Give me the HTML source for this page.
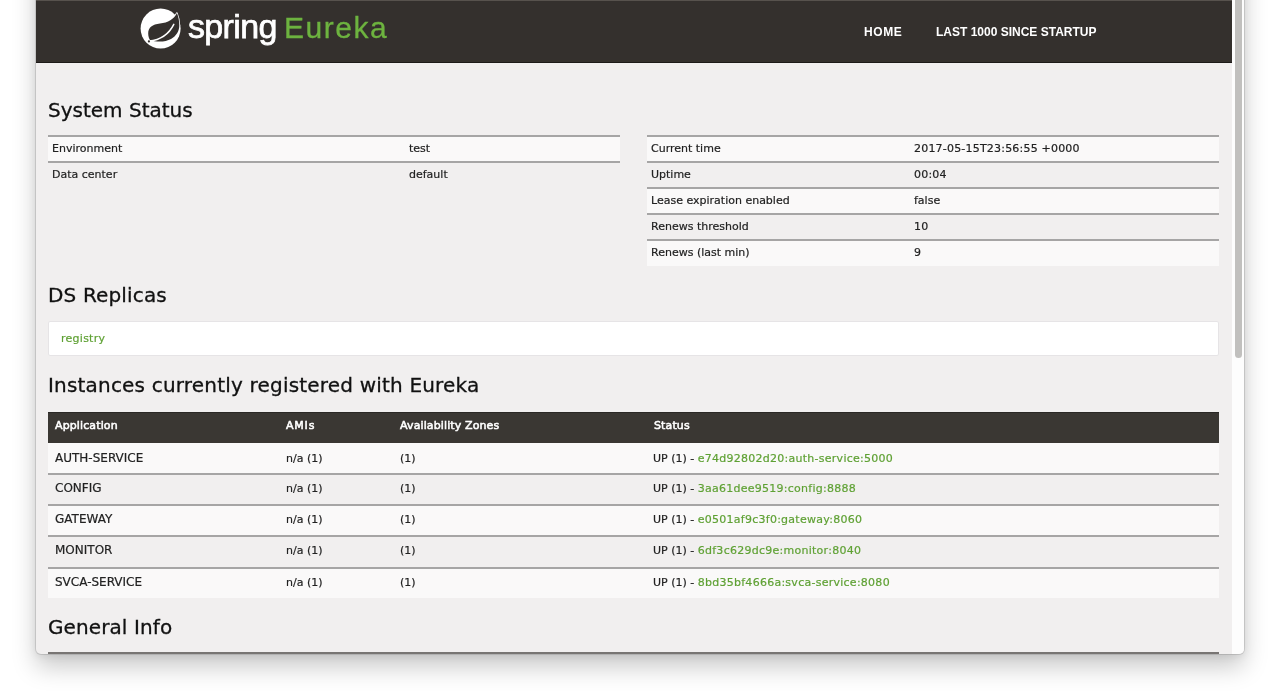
<!DOCTYPE html>
<html lang="en">
<head>
<meta charset="utf-8">
<title>Eureka</title>
<style>
*{box-sizing:border-box;margin:0;padding:0}
html,body{width:1280px;height:696px;overflow:hidden;background:#fff}
body{font-family:"Liberation Sans",sans-serif;color:#1a1a1a;position:relative}
.win{position:absolute;left:36px;top:-80px;width:1208px;height:734px;background:#f1efef;border-radius:5px;overflow:hidden;
  box-shadow:0 0 0 1px rgba(0,0,0,.11),0 13px 25px rgba(0,0,0,.21),0 2px 9px rgba(0,0,0,.08)}
.page{position:absolute;left:-36px;top:80px;width:1280px;height:696px;will-change:transform}
.abs{position:absolute}
.hdr{left:36px;top:0;width:1196px;height:63px;background:#34302d;border-bottom:1px solid #1d1a18}
.topline{left:36px;top:0;width:1208px;height:1px;background:#57524d}
.sbar{left:1232px;top:0;width:13px;height:654px;background:#fdfdfd}
.thumb{left:1235px;top:-10px;width:7px;height:368px;border-radius:4px;background:#c1c0be}
.logo-s{left:188px;top:5px;font-size:34px;line-height:42px;letter-spacing:-.65px;color:#fff;white-space:nowrap;-webkit-text-stroke:.75px #fff}
.logo-e{left:284px;top:10px;font-size:30px;line-height:36px;letter-spacing:1.55px;color:#6db33f;white-space:nowrap;-webkit-text-stroke:.3px #6db33f}
.nav{top:24px;font-size:12px;line-height:16px;font-weight:bold;color:#fff;white-space:nowrap}
h2{position:absolute;left:48px;font-family:"DejaVu Sans","Liberation Sans",sans-serif;font-size:20px;line-height:26px;font-weight:normal;letter-spacing:0;color:#111;white-space:nowrap;-webkit-text-stroke:.3px #111}
table{position:absolute;border-collapse:separate;border-spacing:0;font-family:"DejaVu Sans","Liberation Sans",sans-serif;font-size:11px;line-height:14px;color:#222;table-layout:fixed}
td,th{-webkit-text-stroke:.2px;text-align:left;font-weight:normal;white-space:nowrap;vertical-align:top;overflow:visible}
.kv td{height:26px;border-top:2px solid #a6a5a5;padding:5px 0 0 4px}
.kv tr:nth-child(odd) td{background:#faf9f9}
.kv td.v{padding-left:4px}
.num{letter-spacing:.2px}
.box{left:48px;top:321px;width:1171px;height:35px;background:#fff;border:1px solid #e6e4e6;border-radius:2px}
a{color:#5fa134;text-decoration:none;letter-spacing:.26px}
.inst th{height:31px;background:#3a3733;color:#fff;padding:6px 0 0 7px;letter-spacing:.12px;-webkit-text-stroke:.55px #fff;border-top:1px solid #2a2825}
.inst td{height:31px;padding:7px 0 0 7px;border-top:2px solid #a6a5a5}
.inst tr.r1 td{border-top:none;height:30px;padding-top:9px}
.inst td.s{padding-left:6px}
.inst tr.r4 td{height:32px}
.inst tr:nth-child(even) td{background:#faf9f9}
.inst td.app{font-size:12px;padding-top:6px}
.inst tr.r1 td.app{padding-top:8px}
.gline{left:48px;top:652px;width:1171px;height:2px;background:#787573}
</style>
</head>
<body>
<div class="win"><div class="page">
  <div class="abs hdr"></div>
  <div class="abs topline"></div>
  <svg class="abs" style="left:140px;top:8px" width="44" height="42" viewBox="0 0 44 42">
    <circle cx="20.6" cy="20.6" r="20" fill="#fff"/>
    <path d="M36.9 5 C34 11.2 28 14.6 20 15.6 C12.5 16.5 8.2 19.5 8.2 25.5 C8.2 28.5 9 30.5 10 32 C17 34.4 25.5 34 31 31 C36.3 28 39.3 23 39.3 17.5 C39.3 12.5 38.4 8.5 36.9 5 Z" fill="#34302d" stroke="#fff" stroke-width="1.6" stroke-linejoin="round" paint-order="stroke"/>
    <path d="M9 33 C19 32 28.5 27 33.8 16.3" stroke="#fff" stroke-width="1.5" fill="none" stroke-linecap="round"/>
    <circle cx="8.9" cy="33.4" r="1.1" fill="#34302d"/>
  </svg>
  <div class="abs logo-s" id="t_spring">spring</div>
  <div class="abs logo-e" id="t_eureka">Eureka</div>
  <div class="abs nav" id="t_home" style="left:864px;letter-spacing:.6px">HOME</div>
  <div class="abs nav" id="t_last" style="left:936px">LAST 1000 SINCE STARTUP</div>

  <h2 id="t_h1" style="top:97px">System Status</h2>
  <table class="kv" style="left:48px;top:135px;width:572px">
    <tr><td style="width:357px"><span id="t_env">Environment</span></td><td class="v"><span id="t_test">test</span></td></tr>
    <tr><td><span id="t_dc">Data center</span></td><td class="v"><span id="t_def">default</span></td></tr>
  </table>
  <table class="kv" style="left:647px;top:135px;width:572px">
    <tr><td style="width:263px"><span id="t_ct">Current time</span></td><td class="v num"><span id="t_date">2017-05-15T23:56:55 +0000</span></td></tr>
    <tr><td><span id="t_up">Uptime</span></td><td class="v num">00:04</td></tr>
    <tr><td><span id="t_lease">Lease expiration enabled</span></td><td class="v">false</td></tr>
    <tr><td><span id="t_rt">Renews threshold</span></td><td class="v num">10</td></tr>
    <tr><td style="height:27px"><span id="t_rl">Renews (last min)</span></td><td class="v num">9</td></tr>
  </table>

  <h2 id="t_h2" style="top:282px;letter-spacing:.15px">DS Replicas</h2>
  <div class="abs box"></div>
  <a class="abs" id="t_reg" style="left:61px;top:331px;-webkit-text-stroke:.2px;font-family:'DejaVu Sans','Liberation Sans',sans-serif;font-size:11px;line-height:16px">registry</a>

  <h2 id="t_h3" style="top:372px;letter-spacing:.19px">Instances currently registered with Eureka</h2>
  <table class="inst" style="left:48px;top:412px;width:1171px">
    <tr><th style="width:231px"><span id="t_app">Application</span></th><th style="width:114px"><span id="t_ami" style="letter-spacing:.8px">AMIs</span></th><th style="width:254px"><span id="t_az">Availability Zones</span></th><th><span id="t_st">Status</span></th></tr>
    <tr class="r1"><td class="app"><span id="t_auth">AUTH-SERVICE</span></td><td><span id="t_na">n/a (1)</span></td><td>(1)</td><td class="s"><span id="t_s1">UP (1) - <a>e74d92802d20:auth-service:5000</a></span></td></tr>
    <tr><td class="app">CONFIG</td><td>n/a (1)</td><td>(1)</td><td class="s"><span id="t_s2">UP (1) - <a>3aa61dee9519:config:8888</a></span></td></tr>
    <tr><td class="app">GATEWAY</td><td>n/a (1)</td><td>(1)</td><td class="s"><span id="t_s3">UP (1) - <a>e0501af9c3f0:gateway:8060</a></span></td></tr>
    <tr class="r4"><td class="app">MONITOR</td><td>n/a (1)</td><td>(1)</td><td class="s"><span id="t_s4">UP (1) - <a>6df3c629dc9e:monitor:8040</a></span></td></tr>
    <tr><td class="app"><span id="t_svca">SVCA-SERVICE</span></td><td>n/a (1)</td><td>(1)</td><td class="s"><span id="t_s5">UP (1) - <a>8bd35bf4666a:svca-service:8080</a></span></td></tr>
  </table>

  <h2 id="t_h4" style="top:614px;letter-spacing:.1px">General Info</h2>
  <div class="abs gline"></div>
  <div class="abs sbar"></div>
  <div class="abs thumb"></div>
</div></div>
</body>
</html>
